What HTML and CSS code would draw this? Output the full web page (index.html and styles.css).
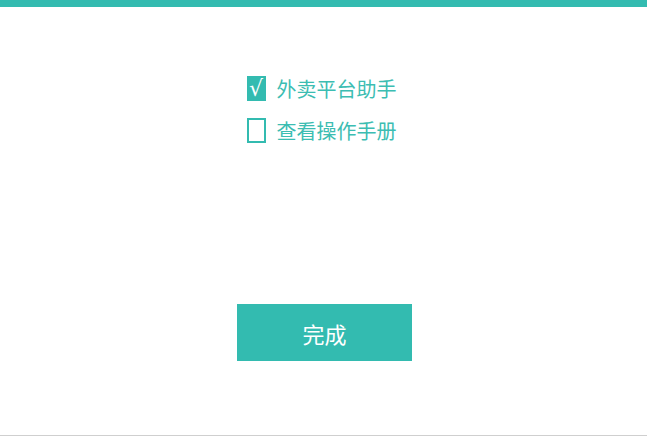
FILE: index.html
```html
<!DOCTYPE html>
<html>
<head>
<meta charset="utf-8">
<title>安装完成</title>
<link rel="stylesheet" href="styles.css">
</head>
<body>
	<div id="page">
		<div class="barre_haut"></div>
		<div class="contenu">
			<ul class="options">
				<li class="option">
					<span class="case case_cochee">√</span>
					<span class="libelle">外卖平台助手</span>
				</li>
				<li class="option">
					<span class="case"></span>
					<span class="libelle">查看操作手册</span>
				</li>
			</ul>
			<button class="bouton_terminer">完成</button>
		</div>
		<div class="barre_bas"></div>
	</div>
</body>
</html>
```

FILE: styles.css
```css
	html, body {
		margin: 0;
		height: 100%;
		background: #fff;
	}

	body {
		font-family: "Noto Sans CJK SC", "Liberation Sans", sans-serif;
	}

	div#page {
		height: 438px;
		display: flex;
		flex-direction: column;
	}

	.barre_haut {
		height: 7px;
		background: #33bbb0;
	}

	.contenu {
		flex: 1;
		display: flex;
		flex-direction: column;
		align-items: center;
	}

	.options {
		list-style: none;
		margin: 69px 4px 0 0;
		padding: 0;
		display: flex;
		flex-direction: column;
		gap: 17px;
	}

	.option {
		display: flex;
		align-items: center;
		height: 25px;
		gap: 11px;
	}

	.case {
		width: 19px;
		height: 25px;
		box-sizing: border-box;
		border: 2px solid #33bbb0;
		display: flex;
		align-items: center;
		justify-content: center;
		color: #fff;
		font-family: "DejaVu Sans", sans-serif;
		font-size: 22px;
		line-height: 1;
	}

	.case_cochee {
		background: #33bbb0;
	}

	.libelle {
		color: #3cbdb2;
		font-size: 20px;
		line-height: 25px;
	}

	.bouton_terminer {
		margin-top: 161px;
		width: 175px;
		height: 57px;
		border: none;
		background: #33bbb0;
		color: #fff;
		font-family: "Noto Sans CJK SC", sans-serif;
		font-size: 22px;
		padding: 0;
		margin-left: 2px;
	}

	.barre_bas {
		height: 1px;
		margin-bottom: 2px;
		background: #cfcfcf;
	}
```
